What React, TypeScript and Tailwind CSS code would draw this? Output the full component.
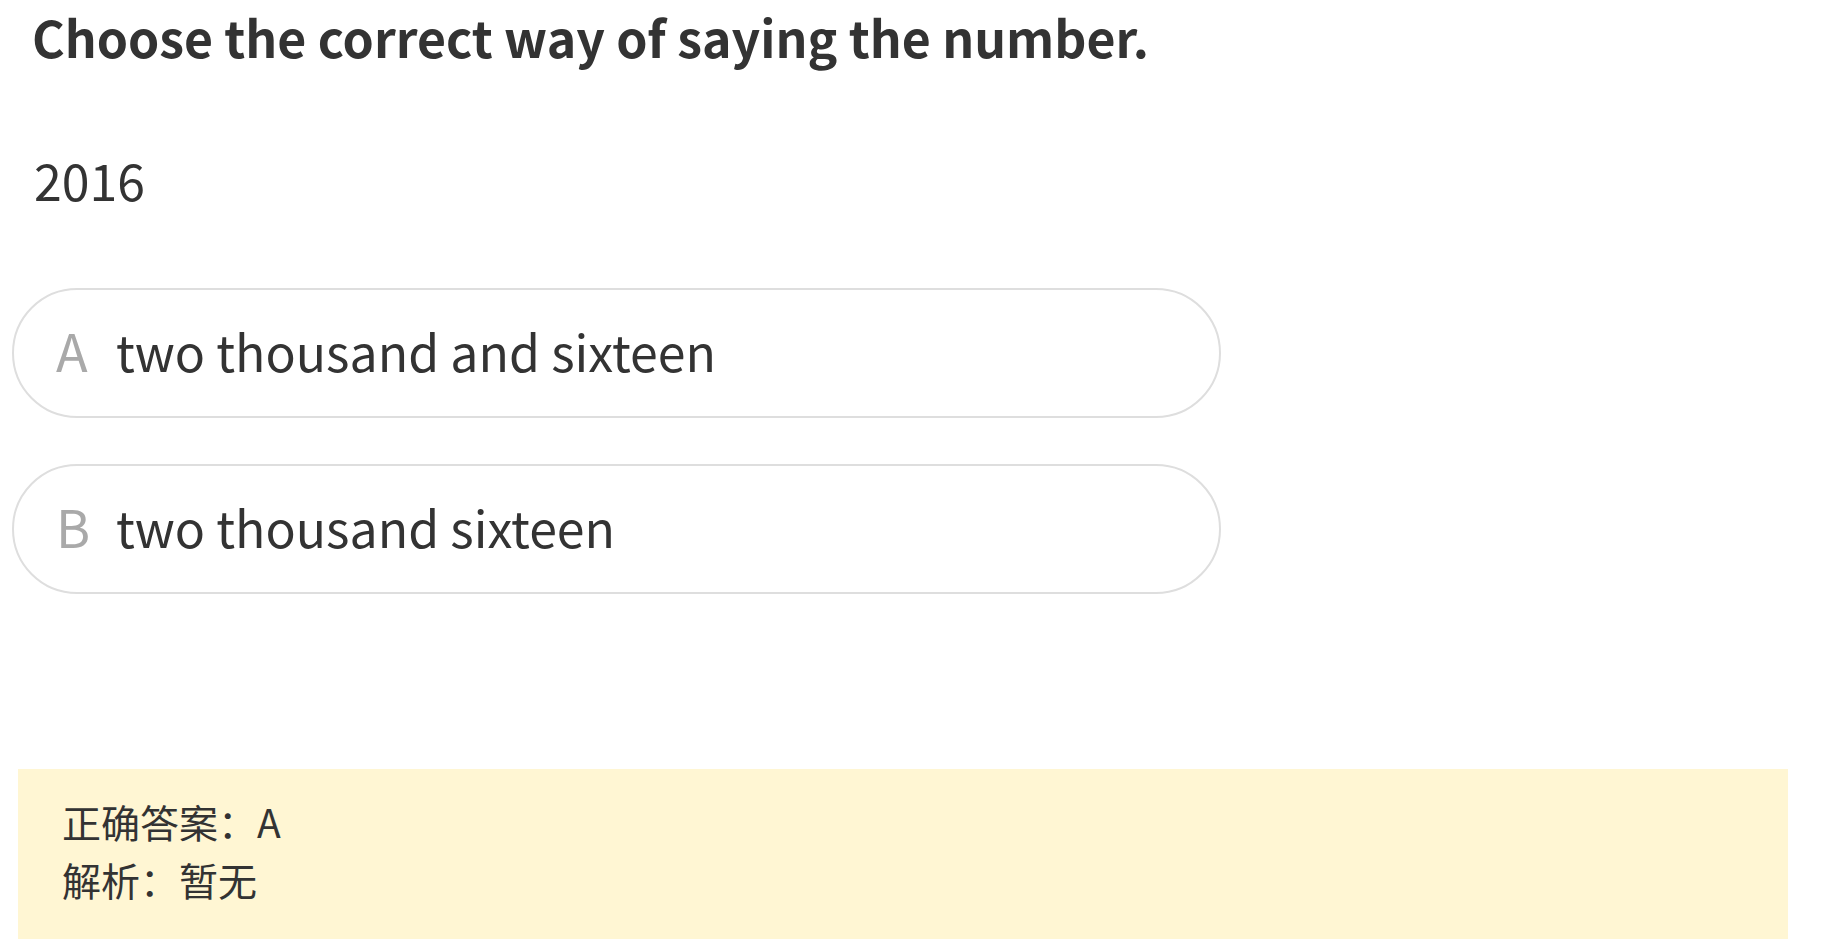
const options = [
  { key: 'A', text: 'two thousand and sixteen' },
  { key: 'B', text: 'two thousand sixteen' },
];

export default function App() {
  return (
    <div
      className="min-h-[939px] bg-white px-[12px] text-[#333333]"
      style={{ fontFamily: '"Noto Sans CJK SC", "Noto Sans", sans-serif' }}
    >
      <div className="pt-[11px] pl-[20px] text-[50px] font-bold leading-[50px]">
        Choose the correct way of saying the number.
      </div>

      <div className="mt-[93px] pl-[22px] text-[50px] leading-[50px]">2016</div>

      <div className="mt-[84px] flex flex-col gap-[46px]">
        {options.map((opt) => (
          <div
            key={opt.key}
            className="flex h-[130px] w-[1209px] items-center rounded-full border-2 border-[#dedede] pb-[6px] pl-[42px]"
          >
            <span className="w-[60px] shrink-0 text-[52px] leading-none text-[#a9a9a9]">{opt.key}</span>
            <span className="text-[50px] leading-none">{opt.text}</span>
          </div>
        ))}
      </div>

      <div className="mt-[175px] ml-[6px] w-[1770px] bg-[#fff6d3] pt-[23px] pb-[33px] pl-[44px] text-[39px] leading-[58px]">
        <div>正确答案：A</div>
        <div>解析：暂无</div>
      </div>
    </div>
  );
}
